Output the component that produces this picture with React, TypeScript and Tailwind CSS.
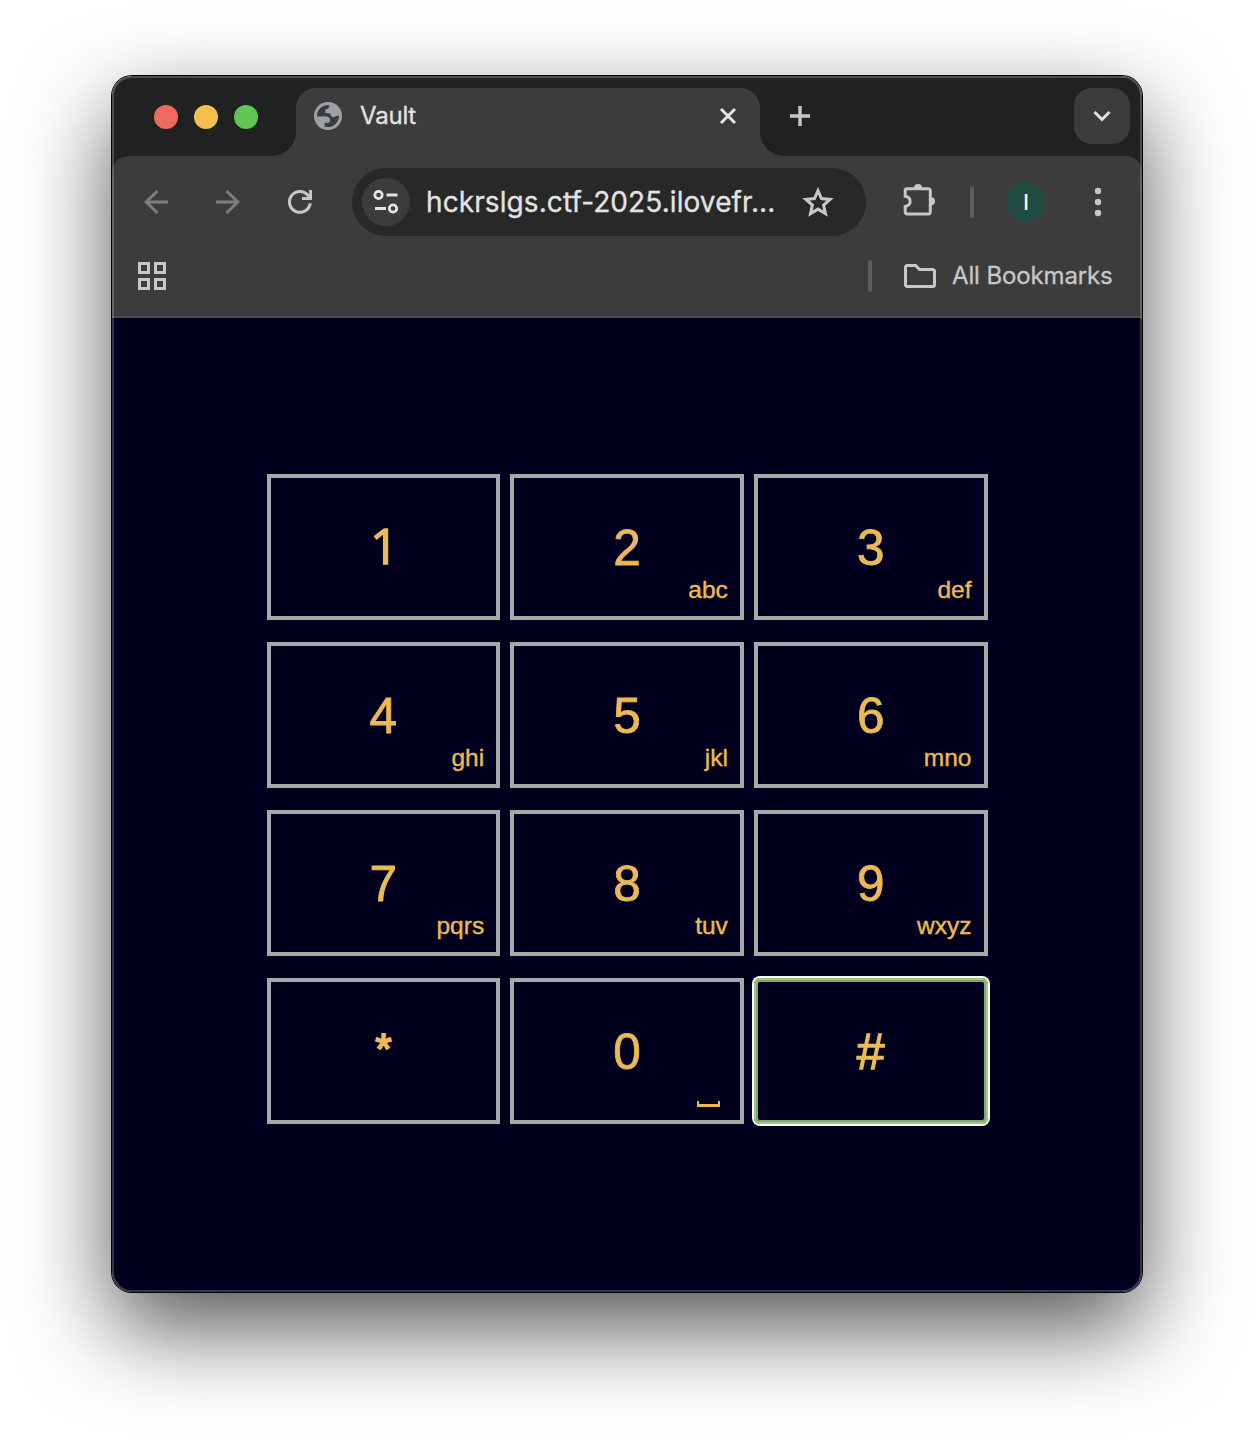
import type { ReactNode } from "react";

type KeyDef = { label: string; letters?: string; space?: boolean; focused?: boolean };

const keys: KeyDef[] = [
  { label: "1" },
  { label: "2", letters: "abc" },
  { label: "3", letters: "def" },
  { label: "4", letters: "ghi" },
  { label: "5", letters: "jkl" },
  { label: "6", letters: "mno" },
  { label: "7", letters: "pqrs" },
  { label: "8", letters: "tuv" },
  { label: "9", letters: "wxyz" },
  { label: "*" },
  { label: "0", space: true },
  { label: "#", focused: true },
];

function Icon({ w, h, className, children }: { w: number; h: number; className?: string; children: ReactNode }) {
  return (
    <svg width={w} height={h} viewBox={`0 0 ${w} ${h}`} fill="none" stroke="currentColor" className={className}>
      {children}
    </svg>
  );
}

function Flare({ side }: { side: "left" | "right" }) {
  return (
    <div className="size-6 self-end bg-[#3c3c3c]">
      <div className={side === "left" ? "size-6 rounded-br-[24px] bg-[#202221]" : "size-6 rounded-bl-[24px] bg-[#202221]"} />
    </div>
  );
}

function TabStrip() {
  return (
    <div className="flex h-20 bg-[#202221] pt-3">
      <div className="flex w-40 gap-4 pl-[42px] pt-[17px]">
        <span className="size-6 rounded-full bg-[#ed6a5e]" />
        <span className="size-6 rounded-full bg-[#f5bf4f]" />
        <span className="size-6 rounded-full bg-[#61c554]" />
      </div>
      <Flare side="left" />
      <div className="flex h-[68px] w-[464px] rounded-t-[20px] bg-[#3c3c3c] pl-[18px] pr-[22px]">
        <Icon w={28} h={28} className="mt-[14px] text-[#9aa0a6]">
          <circle cx="14" cy="14" r="14" fill="currentColor" stroke="none" />
          <path
            d="M15.6 3.2 14.8 5.4c-.3.9-.9 1.3-1.8 1.6l-1.6.6v3.6h4.8c.3 2.6 1.2 3.8 3.4 3.8 2 0 2.6-1.6 5.3-1.6A11 11 0 0 1 10.6 24.6v-3.8h3.2c1.5 0 2.2-1 2.2-2.6 0-2.6-1.4-3.8-4.2-3.8H3A11 11 0 0 1 15.6 3.2Z"
            fill="#3c3c3c"
            stroke="none"
          />
        </Icon>
        <span className="ml-[18px] mt-[10px] text-[24px] leading-9 tracking-[-0.2px] text-[#e3e3e3] [-webkit-text-stroke:0.3px_#e3e3e3]">Vault</span>
        <Icon w={20} h={20} className="ml-auto mt-[18px] text-[#e3e3e3]">
          <path d="M3 3l14 14M17 3 3 17" strokeWidth="3" />
        </Icon>
      </div>
      <Flare side="right" />
      <Icon w={20} h={20} className="ml-[6px] mt-[18px] text-[#c7c7c7]">
        <path d="M10 0v20M0 10h20" strokeWidth="3.4" />
      </Icon>
      <div className="ml-auto mr-3 flex size-14 items-center justify-center rounded-[18px] bg-[#3c3c3c]">
        <Icon w={18} h={12} className="text-[#e3e3e3]">
          <path d="m1.5 2 7.5 7.5L16.5 2" strokeWidth="3" />
        </Icon>
      </div>
    </div>
  );
}

function Toolbar() {
  return (
    <div className="bg-[#202221]">
      <div className="h-[162px] rounded-t-[16px] border-b-2 border-[#4a4c4a] bg-[#3c3c3c]">
        <div className="flex h-[92px] items-center">
          <Icon w={24} h={24} className="ml-8 text-[#7c7c7c]">
            <path d="M24 12H2M13.5 1 2.2 12l11.3 11" strokeWidth="3" />
          </Icon>
          <Icon w={24} h={24} className="ml-12 text-[#7c7c7c]">
            <path d="M0 12h22M10.5 1l11.3 11-11.3 11" strokeWidth="3" />
          </Icon>
          <Icon w={24} h={24} className="ml-12 text-[#c7c7c7]">
            <path d="M22.2 13.2A10.4 10.4 0 1 1 20 5.4L22.4 8" strokeWidth="3" />
            <path d="M22.6 0v8.4H14" strokeWidth="3" />
          </Icon>
          <div className="ml-10 flex h-[68px] w-[514px] items-center rounded-full bg-[#282828] pl-[10px]">
            <div className="flex size-12 items-center justify-center rounded-full bg-[#3c3c3c]">
              <Icon w={26} h={24} className="text-[#e3e3e3]">
                <circle cx="5.5" cy="5" r="3.7" strokeWidth="2.8" />
                <circle cx="20" cy="18.5" r="3.7" strokeWidth="2.8" />
                <path d="M13.5 5h11M2 18.5h11" strokeWidth="2.8" />
              </Icon>
            </div>
            <span className="ml-4 w-[376px] whitespace-nowrap text-[28px] leading-9 tracking-[0.09px] text-[#e3e3e3] [-webkit-text-stroke:0.3px_#e3e3e3]">
              hckrslgs.ctf-2025.ilovefr...
            </span>
            <Icon w={32} h={30} className="-mt-px text-[#c7c7c7]">
              <path
                d="m16 3.6 3.5 8 8.6.8-6.5 5.7 1.9 8.5-7.5-4.5-7.5 4.5 1.9-8.5-6.5-5.7 8.6-.8Z"
                strokeWidth="3"
              />
            </Icon>
          </div>
          <Icon w={34} h={34} className="ml-9 -mt-1 text-[#c7c7c7]">
            <path
              d="M5 5.7h21.5a1.8 1.8 0 0 1 1.8 1.8v21.6a1.8 1.8 0 0 1-1.8 1.8H5a1.8 1.8 0 0 1-1.8-1.8v-5.7c6.6-1.2 6.6-9 0-10.2V7.5A1.8 1.8 0 0 1 5 5.7Z"
              strokeWidth="3"
            />
            <path d="M12 5a4 4 0 0 1 8 0ZM29 14.2a4 4 0 0 1 0 8Z" fill="currentColor" stroke="none" />
          </Icon>
          <span className="ml-[34px] h-8 w-1 rounded-full bg-[#5e5e5e]" />
          <span className="ml-8 flex size-10 items-center justify-center rounded-full bg-[#1f4b40] text-[21px] font-medium leading-none text-white">
            I
          </span>
          <Icon w={8} h={30} className="ml-12 text-[#c7c7c7]">
            <g fill="currentColor" stroke="none">
              <circle cx="4" cy="4" r="3.2" />
              <circle cx="4" cy="15" r="3.2" />
              <circle cx="4" cy="26" r="3.2" />
            </g>
          </Icon>
        </div>
        <div className="flex h-14 items-center pl-[26px] pr-[30px]">
          <Icon w={28} h={28} className="text-[#c7c7c7]">
            <path d="M1.5 1.5h9v9h-9zM17.5 1.5h9v9h-9zM1.5 17.5h9v9h-9zM17.5 17.5h9v9h-9z" strokeWidth="3" />
          </Icon>
          <span className="ml-auto h-8 w-1 rounded-full bg-[#5e5e5e]" />
          <Icon w={32} h={24} className="ml-8 text-[#c7c7c7]">
            <path
              d="M3.2 1.5h8.4l4 4h13.2a1.7 1.7 0 0 1 1.7 1.7v13.6a1.7 1.7 0 0 1-1.7 1.7H3.2a1.7 1.7 0 0 1-1.7-1.7V3.2a1.7 1.7 0 0 1 1.7-1.7Z"
              strokeWidth="3"
            />
          </Icon>
          <span className="ml-4 w-[160px] whitespace-nowrap text-[24px] leading-9 tracking-[-0.13px] text-[#c7c7c7] [-webkit-text-stroke:0.3px_#c7c7c7]">
            All Bookmarks
          </span>
        </div>
      </div>
    </div>
  );
}

function labelClass(label: string) {
  if (label === "1")
    return "-mt-1 block pl-[2px] font-['Open_Sans'] text-[50px] leading-[58px] [-webkit-text-stroke:1.3px_#ebba55]";
  if (label === "*") return "-mt-[5px] block text-[42px] leading-[58px] [-webkit-text-stroke:1.8px_#ebba55]";
  if (label === "#") return "mt-px block text-[50px] leading-[58px] [-webkit-text-stroke:1.3px_#ebba55]";
  return "mt-px block text-[49.5px] leading-[58px] [-webkit-text-stroke:0.8px_#ebba55]";
}

function Keypad() {
  return (
    <div className="mb-3 grid w-[721px] grid-cols-3 gap-x-[10px] gap-y-[22px] font-['Liberation_Sans',Arial,sans-serif]">
      {keys.map((k) => (
        <button
          key={k.label}
          className={
            k.focused
              ? "relative h-[146px] rounded-[6px] border-4 border-[#80a86a] text-[#ebba55] shadow-[0_0_0_2px_#fff] outline-2 -outline-offset-2 outline-[#9dc888]"
              : "relative h-[146px] border-4 border-[#a9a9a9] text-[#ebba55]"
          }
        >
          <span className={labelClass(k.label)}>{k.label}</span>
          {k.letters && (
            <span className="absolute bottom-3 right-3 text-[24.5px] leading-[29px] [-webkit-text-stroke:0.4px_#ebba55]">
              {k.letters}
            </span>
          )}
          {k.space && (
            <span className="absolute bottom-[13px] right-5 h-[6px] w-[23px] border-x-2 border-b-[3px] border-[#ebba55]" />
          )}
        </button>
      ))}
    </div>
  );
}

export default function App() {
  return (
    <div className="h-[1440px] w-[1254px] overflow-hidden bg-white pl-28 pt-[76px] font-[Inter,sans-serif]">
      <div className="relative flex h-[1216px] w-[1030px] flex-col rounded-[20px] shadow-[0_0_0_1px_#000,0_36px_92px_rgba(0,0,0,0.68)]">
        <div className="flex flex-1 flex-col overflow-hidden rounded-[20px]">
          <TabStrip />
          <Toolbar />
          <div className="flex flex-1 items-center justify-center bg-[#00001e]">
            <Keypad />
          </div>
        </div>
        <div className="pointer-events-none absolute inset-0 rounded-[20px] border-2 border-white/20" />
      </div>
    </div>
  );
}
